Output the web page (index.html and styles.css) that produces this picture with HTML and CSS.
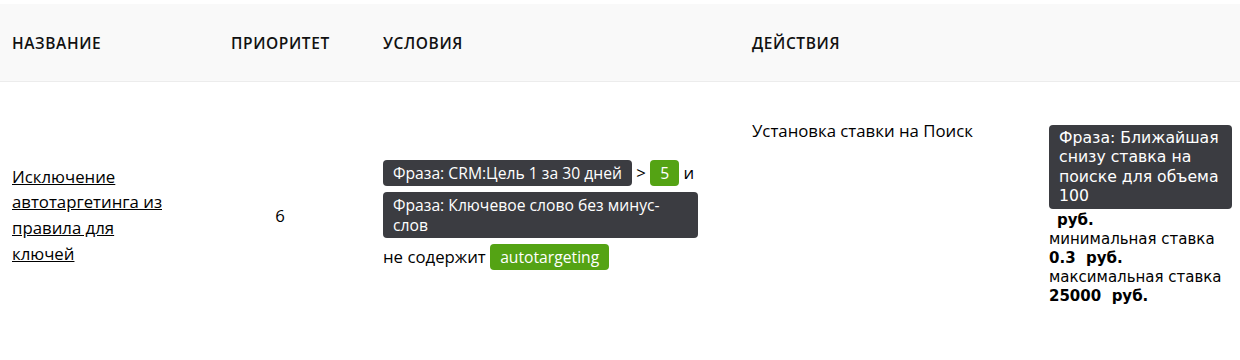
FILE: index.html
```html
<!DOCTYPE html>
<html lang="ru">
<head>
    <meta charset="UTF-8">
    <title>Правила</title>
    <link rel="stylesheet" href="styles.css">
</head>
<body>
    <div class="rules">
        <div class="rules-head">
            <div class="cell cell-name">Название</div>
            <div class="cell cell-priority">Приоритет</div>
            <div class="cell cell-cond">Условия</div>
            <div class="cell cell-actions">Действия</div>
        </div>

        <div class="rules-row">
            <div class="cell cell-name">
                <a href="#" class="rule-link">Исключение автотаргетинга из правила для ключей</a>
            </div>
            <div class="cell cell-priority">6</div>
            <div class="cell cell-cond">
                <div class="cond">
                    <div class="cond-line"><span class="tag">Фраза: CRM:Цель 1 за 30 дней</span> &gt; <span class="tag tag-green">5</span> и</div>
                    <div class="cond-line"><span class="tag">Фраза: Ключевое слово без минус-слов</span></div>
                    <div class="cond-line">не содержит <span class="tag tag-green">autotargeting</span></div>
                </div>
            </div>
            <div class="cell cell-actions">
                <div class="action-name">Установка ставки на Поиск</div>
                <div class="action-params">
                    <span class="tag tag-block">Фраза: Ближайшая снизу ставка на поиске для объема 100</span>
                    <div class="param-value param-indent">руб.</div>
                    <div class="param-label">минимальная ставка</div>
                    <div class="param-value">0.3&nbsp; руб.</div>
                    <div class="param-label">максимальная ставка</div>
                    <div class="param-value">25000&nbsp; руб.</div>
                </div>
            </div>
        </div>
    </div>
</body>
</html>
```

FILE: styles.css
```css
/* Base */
* {
    margin: 0;
    padding: 0;
    box-sizing: border-box;
}

body {
    font-family: 'Open Sans', 'Noto Sans', sans-serif;
    color: #000;
    background: #fff;
    padding-top: 4px;
}

/* Table grid */
.rules-head,
.rules-row {
    display: grid;
    grid-template-columns: 219px 152px 369px 1fr;
    align-items: center;
}

.rules-head {
    height: 78px;
    background: #f9f9f9;
    border-bottom: 1px solid #ececec;
    font-size: 15.5px;
    font-weight: 600;
    letter-spacing: 0.6px;
    text-transform: uppercase;
    color: #111;
}

.rules-row {
    height: 266px;
    font-size: 16.8px;
}

.cell {
    padding-left: 12px;
}

.cell-priority {
    padding-right: 42px;
    text-align: center;
}

/* Name */
.cell-name {
    padding-right: 47px;
}

.rule-link {
    color: #000;
    line-height: 25.7px;
}

/* Conditions */
.cond {
    width: 315px;
    line-height: 20px;
}

.cond-line {
    margin-bottom: 6px;
}

.cond-line:last-child {
    margin-bottom: 0;
}

.tag {
    display: inline-block;
    background: #3b3c41;
    color: #fff;
    font-size: 15.7px;
    line-height: 20px;
    padding: 3px 10px;
    border-radius: 4px;
}

.tag-green {
    background: #54a314;
}

.tag-block {
    display: block;
    line-height: 19.5px;
    padding: 3px 10px;
}

/* Actions */
.cell-actions {
    display: flex;
    align-items: flex-start;
}

.action-name {
    width: 297px;
    line-height: 20px;
    margin-top: -4px;
}

.action-params {
    width: 183px;
    font-family: 'DejaVu Sans', sans-serif;
    font-size: 15px;
    line-height: 19px;
}

.param-value {
    font-weight: bold;
}

.param-indent {
    padding-left: 8px;
    margin-top: 2px;
}
```
